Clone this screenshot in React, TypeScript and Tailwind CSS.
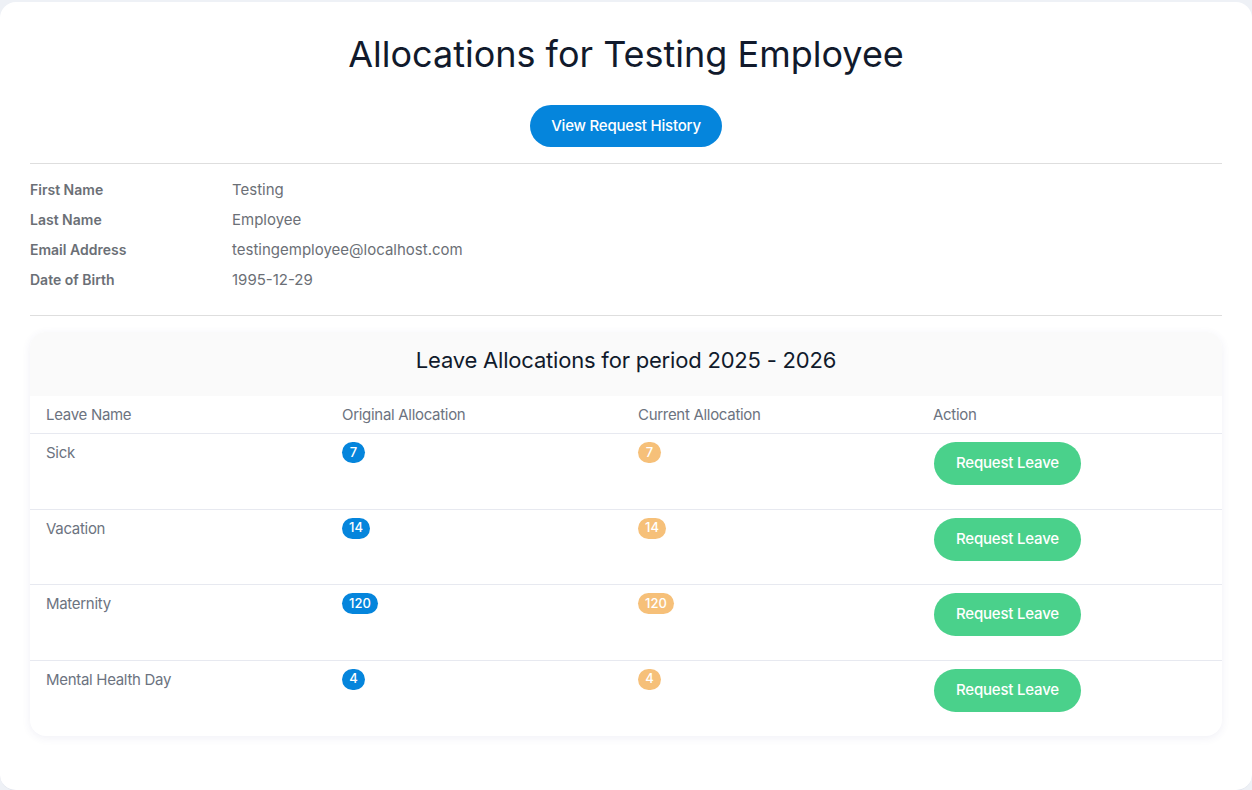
const font = { fontFamily: "Inter, 'Noto Sans', sans-serif" };

const details = [
  { label: "First Name", value: "Testing" },
  { label: "Last Name", value: "Employee" },
  { label: "Email Address", value: "testingemployee@localhost.com" },
  { label: "Date of Birth", value: "1995-12-29" },
];

const allocations = [
  { name: "Sick", original: 7, current: 7 },
  { name: "Vacation", original: 14, current: 14 },
  { name: "Maternity", original: 120, current: 120 },
  { name: "Mental Health Day", original: 4, current: 4 },
];

function Badge({ value, color }: { value: number; color: "blue" | "orange" }) {
  const bg = color === "blue" ? "bg-[#0585dc]" : "bg-[#f6c079]";
  return (
    <span
      className={`inline-flex h-[21px] min-w-[23px] items-center justify-center rounded-full px-[7px] text-[13px] font-medium text-white ${bg}`}
    >
      {value}
    </span>
  );
}

export default function App() {
  return (
    <div className="min-h-screen bg-[#eef1f6] pt-[2px]" style={font}>
      <div className="rounded-[16px] border-b border-[#e3e6ee] bg-white px-[30px] pb-[54px] pt-[31px]">
        {/* Header */}
        <h1 className="text-center text-[36px] leading-[43px] text-[#111a2c]">
          Allocations for Testing Employee
        </h1>
        <div className="mt-[29px] flex justify-center">
          <button className="h-[42px] rounded-full bg-[#0585dc] px-[21px] text-[15px] font-medium tracking-[-0.2px] text-white">
            View Request History
          </button>
        </div>

        <hr className="mt-[16px] border-[#dedede]" />

        {/* Employee details */}
        <div className="pb-[20px] pt-[11px]">
          {details.map((d) => (
            <div key={d.label} className="flex h-[30px] items-baseline leading-[30px] text-[#6b6f76]">
              <span className="w-[202px] text-[14px] font-semibold">{d.label}</span>
              <span className="text-[15px]">{d.value}</span>
            </div>
          ))}
        </div>

        <hr className="border-[#dedede]" />

        {/* Allocations card */}
        <div className="mt-[16px] overflow-hidden rounded-[16px] bg-white shadow-[0_2px_8px_rgba(60,70,140,0.08)]">
          <div className="h-[64px] bg-[#fafafa] pt-[14px] text-center">
            <h2 className="text-[22px] leading-[28px] tracking-[-0.2px] text-[#111a2c]">
              Leave Allocations for period 2025 - 2026
            </h2>
          </div>
          <div className="grid h-[38px] grid-cols-[296px_296px_295px_1fr] items-center border-b border-[#e7e9f0] pt-[1px] text-[15px] tracking-[-0.3px] text-[#6c7380]">
            <div className="pl-[16px]">Leave Name</div>
            <div className="pl-[16px]">Original Allocation</div>
            <div className="pl-[16px]">Current Allocation</div>
            <div className="pl-[16px]">Action</div>
          </div>
          {allocations.map((a, i) => (
            <div
              key={a.name}
              className={`grid h-[75.5px] grid-cols-[296px_296px_295px_1fr] text-[#6c7380] ${
                i < allocations.length - 1 ? "border-b border-[#e7e9f0]" : ""
              }`}
            >
              <div className="pl-[16px] pt-[8px] text-[15px] tracking-[-0.3px]">{a.name}</div>
              <div className="flex items-start pl-[16px] pt-[8px]">
                <Badge value={a.original} color="blue" />
              </div>
              <div className="flex items-start pl-[16px] pt-[8px]">
                <Badge value={a.current} color="orange" />
              </div>
              <div className="pl-[17px] pt-[8px]">
                <button className="h-[43px] w-[147px] rounded-full bg-[#4ad18b] text-[15px] font-medium tracking-[-0.2px] text-white">
                  Request Leave
                </button>
              </div>
            </div>
          ))}
        </div>
      </div>
    </div>
  );
}
